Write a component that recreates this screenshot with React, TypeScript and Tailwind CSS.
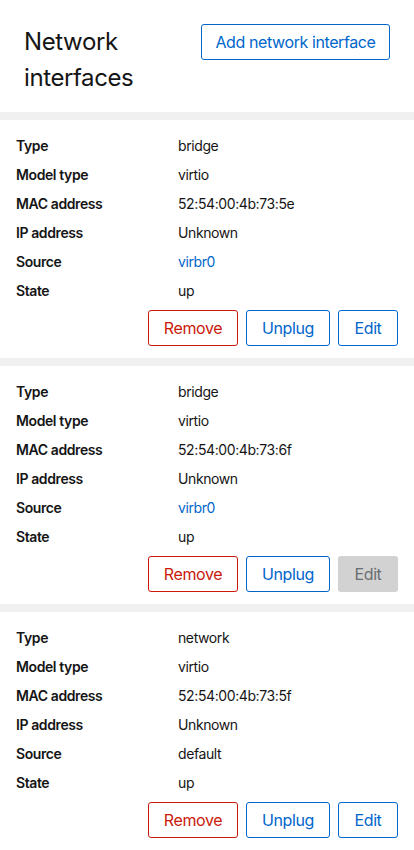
type Nic = {
  type: string;
  model: string;
  mac: string;
  ip: string;
  source: string;
  sourceLink: boolean;
  state: string;
  editDisabled?: boolean;
};

const nics: Nic[] = [
  { type: "bridge", model: "virtio", mac: "52:54:00:4b:73:5e", ip: "Unknown", source: "virbr0", sourceLink: true, state: "up" },
  { type: "bridge", model: "virtio", mac: "52:54:00:4b:73:6f", ip: "Unknown", source: "virbr0", sourceLink: true, state: "up", editDisabled: true },
  { type: "network", model: "virtio", mac: "52:54:00:4b:73:5f", ip: "Unknown", source: "default", sourceLink: false, state: "up" },
];

function Row({ label, children }: { label: string; children: React.ReactNode }) {
  return (
    <div className="flex h-[29px] items-center text-[14px]">
      <dt className="w-[162px] shrink-0 font-semibold text-[#151515]">{label}</dt>
      <dd className="text-[#151515]">{children}</dd>
    </div>
  );
}

function NicCard({ nic }: { nic: Nic }) {
  return (
    <div className="bg-white px-4 pt-[11px] pb-[12px]">
      <dl>
        <Row label="Type">{nic.type}</Row>
        <Row label="Model type">{nic.model}</Row>
        <Row label="MAC address">{nic.mac}</Row>
        <Row label="IP address">{nic.ip}</Row>
        <Row label="Source">
          {nic.sourceLink ? <a className="text-[#0066cc]">{nic.source}</a> : nic.source}
        </Row>
        <Row label="State">{nic.state}</Row>
      </dl>
      <div className="mt-[5px] flex justify-end gap-2">
        <button className="h-9 w-[90px] rounded-[3px] border border-[#c9190b] text-[16px] text-[#c9190b]">
          Remove
        </button>
        <button className="h-9 w-[84px] rounded-[3px] border border-[#0066cc] text-[16px] text-[#0066cc]">
          Unplug
        </button>
        {nic.editDisabled ? (
          <button disabled className="h-9 w-[60px] rounded-[3px] bg-[#d2d2d2] text-[16px] text-[#6a6e73]">
            Edit
          </button>
        ) : (
          <button className="h-9 w-[60px] rounded-[3px] border border-[#0066cc] text-[16px] text-[#0066cc]">
            Edit
          </button>
        )}
      </div>
    </div>
  );
}

export default function App() {
  return (
    <div className="min-h-[850px] w-[414px] bg-white font-['Inter',sans-serif] tracking-[-0.025em] text-[#151515]">
      <div className="flex items-start justify-between gap-4 px-6 pt-6 pb-4">
        <h2 className="text-[24px] leading-[36px] font-normal">Network interfaces</h2>
        <button className="h-9 w-[189px] shrink-0 rounded-[3px] border border-[#0066cc] text-[16px] text-[#0066cc]">
          Add network interface
        </button>
      </div>
      <div className="flex flex-col gap-2 bg-[#f0f0f0] pt-2">
        {nics.map((nic) => (
          <NicCard key={nic.mac} nic={nic} />
        ))}
      </div>
    </div>
  );
}
